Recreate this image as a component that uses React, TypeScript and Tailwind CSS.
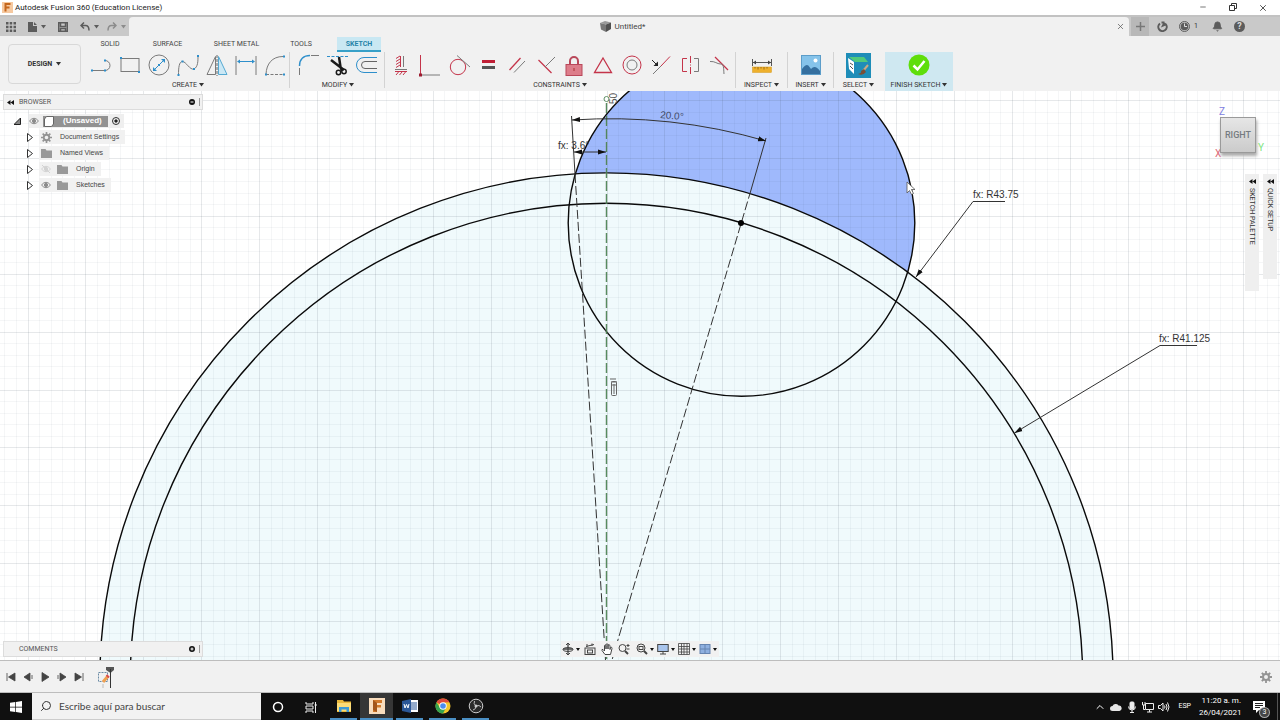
import React, { useState } from 'react';
import { Bell, ChevronUp, Minus, Search, Settings, X } from 'lucide-react';

const BLUE = '#2e8fcb';
const RED = '#c4344a';
const GREY = '#7a7a7a';

type IconDef = { label: string; art: React.ReactNode };

const Dots = ({ at }: { at: number[][] }) => (
  <>
    {at.map(([x, y]) => (
      <rect key={`${x}-${y}`} x={x - 1} y={y - 1} width="2" height="2" fill={BLUE} stroke="none" />
    ))}
  </>
);

const Art = ({ children, size = 24 }: { children: React.ReactNode; size?: number }) => (
  <svg width={size} height={size} viewBox="0 0 24 24" fill="none" stroke={GREY} strokeWidth="1" aria-hidden="true">
    {children}
  </svg>
);

const Caret = ({ className = 'text-[#333]' }: { className?: string }) => (
  <svg width="5" height="4" viewBox="0 0 5 4" className={`shrink-0 ${className}`} aria-hidden="true">
    <path d="M0 0H5L2.5 3.5Z" fill="currentColor" />
  </svg>
);

const createTools: IconDef[] = [
  { label: 'Line', art: <><path d="M3 17.5H16a5 5 0 0 0 0-10" /><Dots at={[[3, 17.5], [16, 17.5], [16, 7.5]]} /></> },
  { label: 'Rectangle', art: <><rect x="3" y="5.5" width="18" height="13" /><Dots at={[[3, 5], [21, 19]]} /></> },
  {
    label: 'Circle',
    art: (
      <>
        <circle cx="12" cy="12" r="10" />
        <path d="M7 17L17 7" stroke={BLUE} />
        <path d="M6 18v-4l4 4zM18 6v4l-4-4zM11 11h2v2h-2z" fill={BLUE} stroke="none" />
      </>
    ),
  },
  { label: 'Spline', art: <><path d="M2.5 22C2.500 15 3 8.500 6.500 8.500S14 17.500 18 16C22 14 22 8 22 3" /><Dots at={[[2.5, 22], [6.5, 8.5], [18, 16], [22, 3]]} /></> },
  {
    label: 'Mirror',
    art: (
      <>
        <path d="M2 21.500H10.500V3.500Z" />
        <path d="M13.500 3.500L22 21.500H13.500Z" fill="#cbe8f5" stroke="#55a9d2" />
        <path d="M12 2V23" stroke="#666" strokeDasharray="3 1" />
      </>
    ),
  },
  {
    label: 'Sketch Dimension',
    art: (
      <>
        <path d="M2 3V22M22 3V22" />
        <path d="M4 8.500H20" stroke={BLUE} />
        <path d="M3 8.500L6 6.500V10.500ZM21 8.500L18 6.500V10.500Z" fill={BLUE} stroke="none" />
      </>
    ),
  },
  { label: 'Arc', art: <><path d="M3 21C3.500 11 9 3.500 20 3.500" /><path d="M3 21.500H20" strokeDasharray="3 1.500" /><Dots at={[[3, 21.5], [21, 3.5], [21, 21.5]]} /></> },
];

const modifyTools: IconDef[] = [
  { label: 'Fillet', art: <><path d="M2.500 15V22M14 2.500H22" /><path d="M2.500 13C2.500 6 7 2.500 13 2.500" stroke={BLUE} strokeWidth="1.500" /></> },
  {
    label: 'Trim',
    art: (
      <>
        <path d="M1 3.500H22" stroke={BLUE} strokeDasharray="3 1.500" />
        <path d="M13 4L14.500 14L16 18M5 7L18 17" stroke="#1a1a1a" strokeWidth="2.500" />
        <circle cx="12.500" cy="19.500" r="2.200" stroke="#1a1a1a" strokeWidth="1.500" />
        <circle cx="18" cy="18.500" r="2.200" stroke="#1a1a1a" strokeWidth="1.500" />
      </>
    ),
  },
  { label: 'Offset', art: <><path d="M22 4.500H9a7.500 7.500 0 0 0 0 15H22" stroke={BLUE} /><path d="M22 8.500H10a3.500 3.500 0 0 0 0 7H22" stroke="#666" /></> },
];

const constraintTools: IconDef[] = [
  {
    label: 'Horizontal/Vertical',
    art: (
      <>
        <path d="M11.500 3V14M7 5.500l4-2.500M7 8.500l4-2.500M7 11.500l4-2.500M7 14.500l4-2.500" stroke={RED} />
        <path d="M14.500 3V14M6 16.500H18" />
        <path d="M7 22l2.500-3M10.500 22l2.500-3M14 22l2.500-3M6 18.500H18" stroke={RED} />
      </>
    ),
  },
  { label: 'Coincident', art: <><path d="M2.500 2V22" stroke={RED} /><path d="M3 22H22" /><rect x="1" y="20.500" width="3" height="3" fill="#9c1c30" stroke="none" /></> },
  { label: 'Tangent', art: <><circle cx="11" cy="14" r="7.700" stroke={RED} /><path d="M10 2.500L23 14" /></> },
  { label: 'Equal', art: <><rect x="6" y="7" width="13" height="3" fill="#c01f36" stroke="none" /><rect x="6" y="13" width="13" height="3" fill="#555" stroke="none" /></> },
  { label: 'Parallel', art: <><path d="M4.500 17L15.500 5" stroke={RED} strokeWidth="1.300" /><path d="M9 19.500L20 8" /></> },
  { label: 'Perpendicular', art: <><path d="M4.500 7L17.500 20" stroke={RED} strokeWidth="1.300" /><path d="M11 14L21 4" /></> },
  {
    label: 'Fix/Unfix',
    art: (
      <>
        <path d="M8 12V8a4 4 0 0 1 8 0V12" stroke="#b9485a" strokeWidth="2" />
        <rect x="4" y="11.500" width="16" height="11" fill="#dd7d8a" stroke="#b9485a" />
        <path d="M12 15V18" stroke="#a33" />
      </>
    ),
  },
  { label: 'Midpoint', art: <path d="M12 5L20.500 19.500H3.500Z" stroke={RED} strokeWidth="1.300" /> },
  { label: 'Concentric', art: <><circle cx="12" cy="12" r="9" stroke={RED} /><circle cx="12" cy="12" r="5" /></> },
  {
    label: 'Collinear',
    art: (
      <>
        <path d="M4 21L12 13" />
        <path d="M12 13L21 3.500" stroke={RED} />
        <path d="M3 7L8 12" stroke="#222" />
        <path d="M9 13V8.500L4.500 13Z" fill="#222" stroke="none" />
      </>
    ),
  },
  { label: 'Symmetry', art: <><path d="M9 5.500H4.500V18.500H9" stroke={RED} /><path d="M12.500 3V21" stroke={RED} strokeDasharray="7 1.500 1 1.500" /><path d="M16 5.500H20.500V18.500H16" /></> },
  { label: 'Curvature', art: <><path d="M8 4L21 17" stroke={RED} strokeWidth="1.300" /><path d="M3 8.500C8 8 10 11 13.500 11S16.500 15 17 21" /></> },
];

const ToolButtons = ({ tools, width }: { tools: IconDef[]; width: string }) => (
  <div className={`flex h-[26px] items-center ${width}`}>
    {tools.map(t => (
      <button key={t.label} type="button" aria-label={t.label} className="flex flex-1 justify-center">
        <Art>{t.art}</Art>
      </button>
    ))}
  </div>
);

const Group = ({ label, children, className = '' }: { label: string; children: React.ReactNode; className?: string }) => (
  <div className={`flex flex-col items-center ${className}`}>
    {children}
    <button type="button" className="mt-px flex h-3 items-center gap-0.5 text-[7px] leading-3 whitespace-nowrap text-[#333]">
      {label}
      <Caret />
    </button>
  </div>
);

const Divider = () => <div className="h-9 w-px bg-[#d3d3d3]" />;

const TitleBar = () => (
  <header className="flex h-[15px] shrink-0 items-center bg-white pl-0.5">
    <svg width="11" height="11" viewBox="0 0 11 11" aria-hidden="true">
      <rect width="11" height="11" fill="#f6c9a0" />
      <path d="M3.500 9.500V2H8.500M3.500 5.500H7.500" fill="none" stroke="#c4661c" strokeWidth="2" />
    </svg>
    <h1 className="ml-0.5 text-[8px] leading-[15px] whitespace-nowrap text-[#222]">Autodesk Fusion 360 (Education License)</h1>
    <div className="mr-0.5 ml-auto flex text-[#333]">
      <button type="button" aria-label="Minimize" className="flex w-[30px] justify-center"><Minus size={8} /></button>
      <button type="button" aria-label="Restore" className="flex w-[30px] justify-center">
        <svg width="8" height="8" viewBox="0 0 8 8" fill="none" stroke="currentColor">
          <path d="M.5 2.500H5.500V7.500H.5ZM2.500 2.500V.5H7.500V5.500H5.500" />
        </svg>
      </button>
      <button type="button" aria-label="Close" className="flex w-[30px] justify-center"><X size={10} /></button>
    </div>
  </header>
);

const TabBar = () => (
  <div className="flex h-[21px] shrink-0 border-t-2 border-[#c2c2c2] bg-[#c9c9c9] text-[#5c5c5c]">
    <div className="flex w-[129px] items-center pl-1.5">
      <button type="button" aria-label="Data panel">
        <svg width="10" height="10" viewBox="0 0 10 10" fill="currentColor">
          <path d="M0 0h2.500v2.500H0zM3.700 0h2.500v2.500H3.700zM7.500 0H10v2.500H7.500zM0 3.700h2.500v2.500H0zM3.700 3.700h2.500v2.500H3.700zM7.500 3.700H10v2.500H7.500zM0 7.500h2.500V10H0zM3.700 7.500h2.500V10H3.700zM7.500 7.500H10V10H7.500z" />
        </svg>
      </button>
      <button type="button" aria-label="File" className="ml-3 flex items-center gap-1">
        <svg width="9" height="10" viewBox="0 0 9 10" fill="currentColor"><path d="M0 0H5V4H9V10H0ZM6 0L9 3H6Z" /></svg>
        <Caret className="text-[#5c5c5c]" />
      </button>
      <button type="button" aria-label="Save" className="ml-3">
        <svg width="10" height="10" viewBox="0 0 10 10" fill="none" stroke="currentColor" strokeWidth="1.500">
          <path d="M.7.7H9.300V9.300H.7ZM2.500.7V4.500H7.500V.7M2.500 9.300V6.500H7.500V9.300" />
        </svg>
      </button>
      <button type="button" aria-label="Undo" className="ml-3 flex items-center gap-1">
        <svg width="10" height="9" viewBox="0 0 10 9"><path d="M4 .5L1 3.500 4 6.500M1 3.500H5.500Q9 3.500 9 8.500" fill="none" stroke="currentColor" strokeWidth="1.500" /></svg>
        <Caret className="text-[#5c5c5c]" />
      </button>
      <button type="button" aria-label="Redo" className="ml-2 flex items-center gap-1 text-[#8c8c8c]">
        <svg width="10" height="9" viewBox="0 0 10 9"><path d="M6 .5L9 3.500 6 6.500M9 3.500H4.500Q1 3.500 1 8.500" fill="none" stroke="currentColor" strokeWidth="1.500" /></svg>
        <Caret className="text-[#8c8c8c]" />
      </button>
    </div>
    <div className="flex flex-1 items-center rounded-t-sm bg-[#f1f1f1] pr-1">
      <div className="flex flex-1 items-center justify-center gap-1">
        <svg width="11" height="11" viewBox="0 0 11 11" aria-hidden="true">
          <path d="M0 2L5 0L11 1.500L6 3.500Z" fill="#999" />
          <path d="M0 2L6 3.500V11L1 8.500Z" fill="#777" />
          <path d="M6 3.500L11 1.500V8L6 11Z" fill="#505050" />
        </svg>
        <span className="text-[8px] leading-3 text-[#444]">Untitled*</span>
      </div>
      <button type="button" aria-label="Close tab"><X size={9} /></button>
    </div>
    <div className="flex w-[151px] items-center">
      <button type="button" aria-label="New tab" className="ml-0.5 flex h-full w-[18px] items-center justify-center bg-[#b8b8b8]">
        <svg width="9" height="9" viewBox="0 0 9 9"><path d="M4.500 0V9M0 4.500H9" stroke="#777" strokeWidth="1.500" /></svg>
      </button>
      <button type="button" aria-label="Extensions" className="ml-2">
        <svg width="11" height="11" viewBox="0 0 11 11" fill="none" stroke="currentColor" strokeWidth="2">
          <path d="M3 2.500A4.200 4.200 0 1 0 9 3.500M4.500 1.500H7.500M7.500 1.500L6 4.500L9.500 3" />
        </svg>
      </button>
      <button type="button" className="ml-[11px] flex items-center gap-1 text-[7px] text-[#333]">
        <svg width="11" height="11" viewBox="0 0 11 11" fill="none">
          <circle cx="5.500" cy="5.500" r="5" stroke="#5c5c5c" />
          <circle cx="5.500" cy="5.500" r="3.800" fill="#5c5c5c" />
          <path d="M5.500 2.500V5.500H8" stroke="#ddd" />
        </svg>
        1
      </button>
      <button type="button" aria-label="Notifications" className="ml-3.5"><Bell size={11} fill="currentColor" /></button>
      <button type="button" aria-label="Help" className="ml-[11px] flex size-[11px] items-center justify-center rounded-full bg-[#5c5c5c] text-[9px] leading-none font-bold text-[#ddd]">?</button>
    </div>
  </div>
);

const ribbonTabs = [
  { name: 'SOLID', width: 'w-[46px]' },
  { name: 'SURFACE', width: 'w-[69px]' },
  { name: 'SHEET METAL', width: 'w-[69px]' },
  { name: 'TOOLS', width: 'w-[60px]' },
  { name: 'SKETCH', width: 'ml-1.5 w-[44px]' },
];

const Ribbon = () => {
  const [tab, setTab] = useState('SKETCH');

  return (
    <div className="flex h-[55px] shrink-0 bg-[#f1f1f1]">
      <button type="button" className="mt-2 ml-2 flex h-10 w-[73px] items-center justify-center gap-1 rounded-sm border border-[#d8d8d8] text-[7px] font-bold text-[#333]">
        DESIGN
        <Caret />
      </button>
      <div className="ml-1.5">
        <nav className="flex h-4 pt-px">
          {ribbonTabs.map(t => (
            <button
              key={t.name}
              type="button"
              onClick={() => setTab(t.name)}
              className={`h-[15px] text-[7px] ${t.width} ${
                tab === t.name ? 'bg-[#c9e8f3] font-bold text-[#2684a8] shadow-[inset_0_-2px_0_#37a0c8]' : 'text-[#444]'
              }`}
            >
              {t.name}
            </button>
          ))}
        </nav>
        <div className="flex h-[39px]">
          <Group label="CREATE"><ToolButtons tools={createTools} width="w-[202px]" /></Group>
          <Divider />
          <Group label="MODIFY" className="ml-1 mr-0.5"><ToolButtons tools={modifyTools} width="w-[88px]" /></Group>
          <Divider />
          <Group label="CONSTRAINTS" className="mx-0.5"><ToolButtons tools={constraintTools} width="w-[346px]" /></Group>
          <Divider />
          <Group label="INSPECT" className="w-[51px]">
            <button type="button" aria-label="Measure" className="flex h-[26px] items-center">
              <Art>
                <path d="M2.500 6V13M21.500 6V13M3 9.500H21" stroke="#555" />
                <path d="M3 9.500l3-2v4zM21 9.500l-3-2v4z" fill="#444" stroke="none" />
                <rect x="2.500" y="14" width="19" height="5.500" fill="#eeb02c" stroke="#d69a1e" strokeWidth=".5" />
                <path d="M5 14v1.500M8 14v2.500M11 14v1.500M14 14v2.500M17 14v1.500" stroke="#8a5c10" strokeWidth=".8" />
              </Art>
            </button>
          </Group>
          <Divider />
          <Group label="INSERT" className="w-[45px]">
            <button type="button" aria-label="Insert image" className="flex h-[26px] items-center">
              <Art>
                <rect x="2.500" y="2.500" width="19" height="19" fill="#85c3ea" stroke="#5c9dc9" />
                <path d="M3 16Q8 9 10.500 14L12 16Q16 11 21 18V21H3Z" fill="#356f9f" stroke="none" />
                <circle cx="16.500" cy="7.500" r="2" fill="#fff" stroke="none" />
              </Art>
            </button>
          </Group>
          <Divider />
          <Group label="SELECT" className="w-[49px]">
            <button type="button" aria-label="Select" className="flex h-[26px] items-center">
              <svg width="25" height="25" viewBox="0 0 25 25">
                <rect width="25" height="25" fill="#1e8db8" />
                <path d="M2 5L8 9V21L3 16Z" fill="#fff" />
                <path d="M4 10L7 12M4 13L7 16" stroke="#555" strokeWidth="1" />
                <path d="M3 4H18L22 9H9Z" fill="#4fc97c" />
                <path d="M22 12L17 18" stroke="#c9a883" strokeWidth="2" />
                <path d="M18 16L20 19Q17 23 12 21Q16 20 15 18Z" fill="#7b4f37" />
              </svg>
            </button>
          </Group>
          <Group label="FINISH SKETCH" className="ml-0.5 w-[68px] bg-[#cfe8f1]">
            <button type="button" aria-label="Finish sketch" className="flex h-[26px] items-center">
              <Art>
                <circle cx="12" cy="12" r="10.500" fill="#5ede0b" stroke="none" />
                <path d="M6.500 12.500L10.500 16.500L17.500 8" stroke="#fff" strokeWidth="2.500" />
              </Art>
            </button>
          </Group>
        </div>
      </div>
    </div>
  );
};

// sketch origin, and screen pixels for one grid step (1 mm)
const ORIGIN = { x: 606.5, y: 679.5 };
const STEP = 11.58;

const gridLines = (origin: number, from: number, to: number) => {
  const lines: { at: number; major: boolean }[] = [];
  for (let i = Math.ceil((from - origin) / STEP); origin + i * STEP <= to; i++) {
    lines.push({ at: Math.floor(origin + i * STEP), major: i % 5 === 0 });
  }
  return lines;
};

const Sketch = () => (
  <svg className="block h-full w-full" viewBox="0 91 1280 569" preserveAspectRatio="xMidYMid slice" fontFamily="Liberation Sans, Arial, sans-serif" fontSize="10">
    <defs>
      <marker id="arrow" viewBox="0 0 8 6" refX="8" refY="3" markerWidth="8" markerHeight="6" orient="auto-start-reverse" markerUnits="userSpaceOnUse">
        <path d="M0 .5L8 3L0 5.500Z" fill="#111" />
      </marker>
    </defs>
    <rect x="0" y="91" width="1280" height="569" fill="#fff" />
    <circle cx="741.500" cy="223" r="173.300" fill="#9fb9fc" />
    <circle cx={ORIGIN.x} cy={ORIGIN.y} r="506.600" fill="#f0fafc" />
    <g shapeRendering="crispEdges" stroke="#40505a">
      {gridLines(ORIGIN.x + 0.5, 0, 1280).map(l => (
        <line key={l.at} x1={l.at + 0.5} x2={l.at + 0.5} y1="91" y2="660" strokeOpacity={l.major ? 0.13 : 0.05} />
      ))}
      {gridLines(ORIGIN.y, 91, 660).map(l => (
        <line key={l.at} y1={l.at + 0.5} y2={l.at + 0.5} x1="0" x2="1280" strokeOpacity={l.major ? 0.13 : 0.05} />
      ))}
    </g>
    <g fill="none" stroke="#0a0a0a" strokeWidth="1.400">
      <circle cx={ORIGIN.x} cy={ORIGIN.y} r="506.600" />
      <circle cx={ORIGIN.x} cy={ORIGIN.y} r="476.200" />
      <circle cx="741.500" cy="223" r="173.300" />
    </g>
    <path d="M606.500 103V660" stroke="#8b9a8b" strokeOpacity=".6" strokeWidth="2" strokeDasharray="10 3" />
    <path d="M606.500 103V660" stroke="#3f7f48" strokeOpacity=".8" strokeWidth="1" strokeDasharray="10 3" />
    <circle cx="606.500" cy="99" r="2.500" fill="#fff" stroke="#5f8f66" />
    <g fill="none" stroke="#333" strokeWidth="1">
      <path d="M575 174L605.500 660M751 190L612 660" strokeDasharray="9 3" />
      <path d="M571.500 116L575 174M766 138L751 190" />
      <path d="M572 120A561 561 0 0 1 766 141" markerStart="url(#arrow)" markerEnd="url(#arrow)" />
      <path d="M574 152H606" markerStart="url(#arrow)" markerEnd="url(#arrow)" />
      <path d="M1005 201.500H973L916 277" markerEnd="url(#arrow)" />
      <path d="M1197 345.500H1160L1014.500 433" markerEnd="url(#arrow)" />
    </g>
    <circle cx="741" cy="223" r="3" fill="#000" />
    <g fill="#333">
      <text x="660" y="118" fill="#444c66" transform="rotate(5 660 118)">20.0°</text>
      <text x="558" y="149">fx: 3.6°</text>
      <text x="973" y="198">fx: R43.75</text>
      <text x="1159" y="342">fx: R41.125</text>
      <text x="617" y="104" fill="#555" transform="rotate(-90 617 104)">50</text>
    </g>
    <g fill="none" stroke="#666" strokeWidth="1">
      <path d="M610 379h6M611 382h6M611 385h6" />
      <rect x="611.500" y="381.500" width="5" height="14" rx="1" />
      <path d="M614 384v10" />
    </g>
    <path d="M907 182v11l2.500-2.500 2 4 2-1-2-4h3.500z" fill="#fff" stroke="#555" strokeWidth=".8" />
  </svg>
);

const Eye = ({ off }: { off?: boolean }) => (
  <svg width="10" height="8" viewBox="0 0 10 8" fill="none" stroke={off ? '#d2d2d2' : '#8a8a8a'} aria-hidden="true">
    <path d="M.5 4Q5-1.500 9.500 4Q5 9.500.5 4Z" />
    <circle cx="5" cy="4" r="1.600" fill={off ? '#d2d2d2' : '#8a8a8a'} />
    {off && <path d="M1 0L9 8" />}
  </svg>
);

const Gear = ({ size }: { size: number }) => (
  <svg width={size} height={size} viewBox="0 0 12 12" fill="none" stroke="#949494" aria-hidden="true">
    <circle cx="6" cy="6" r="3" strokeWidth="2" />
    <path d="M6 0V2.500M6 9.500V12M0 6H2.500M9.500 6H12M1.800 1.800L3.500 3.500M8.500 8.500L10.200 10.200M1.800 10.200L3.500 8.500M8.500 3.500L10.200 1.800" strokeWidth="1.800" />
  </svg>
);

const Folder = () => (
  <svg width="11" height="9" viewBox="0 0 11 9" aria-hidden="true"><path d="M0 0H4.500L5.500 1.500H11V9H0Z" fill="#999" /></svg>
);

const treeItems = [
  { name: 'Document Settings', icon: <Gear size={11} /> },
  { name: 'Named Views', icon: <Folder /> },
  { name: 'Origin', icon: <Folder />, eye: 'off' },
  { name: 'Sketches', icon: <Folder />, eye: 'on' },
];

const PanelHeader = ({ title, open }: { title: string; open?: boolean }) => (
  <div className="flex h-4 items-center border border-[#dcdcdc] bg-[#f1f1f1] pl-[3px]">
    <div className="w-3">
      {open && <svg width="7" height="5" viewBox="0 0 7 5"><path d="M3.500 0V5L0 2.500ZM7 0V5L3.500 2.500Z" fill="#111" /></svg>}
    </div>
    <h2 className="text-[7px] text-[#555]">{title}</h2>
    <button type="button" aria-label={`Toggle ${title.toLowerCase()}`} className="ml-auto">
      <svg width="6" height="6" viewBox="0 0 6 6">
        <circle cx="3" cy="3" r="3" fill="#111" />
        <path d={open ? 'M1.500 3H4.500' : 'M1.500 3H4.500M3 1.500V4.500'} stroke="#fff" />
      </svg>
    </button>
    <div className="mr-0.5 ml-1 h-2 w-px bg-[#999]" />
  </div>
);

const Browser = () => (
  <aside className="absolute top-[3px] left-[3px] w-[200px]">
    <PanelHeader title="BROWSER" open />
    <ul className="pt-[3px] font-['Liberation_Sans',Arial,sans-serif] text-[7px] text-[#444]">
      <li className="flex h-4 items-center pl-[11px]">
        <svg width="7" height="7" viewBox="0 0 7 7"><path d="M6.500 0V6.500H0Z" fill="#888" stroke="#222" /></svg>
        <div className="ml-2 flex h-3.5 items-center gap-1 bg-[#efefef] pr-1">
          <Eye />
          <div className="flex h-[11px] items-center bg-[#929292] pr-1.5 text-[8px] font-bold text-white">
            <svg width="12" height="11" viewBox="0 0 12 11" className="mr-2"><path d="M1.500 3L3.500.5H10.500V8L8.500 10.500H1.500Z" fill="#fff" stroke="#666" /></svg>
            (Unsaved)
          </div>
          <input type="radio" name="active-component" aria-label="Activate component" defaultChecked className="size-2 appearance-none rounded-full border border-[#333] bg-[radial-gradient(#222_35%,transparent_40%)]" />
        </div>
      </li>
      {treeItems.map(item => (
        <li key={item.name} className="flex h-4 items-center pl-6">
          <button type="button" aria-label={`Expand ${item.name}`}>
            <svg width="6" height="9" viewBox="0 0 6 9"><path d="M.5.5L5.500 4.500L.5 8.500Z" fill="#fff" stroke="#333" /></svg>
          </button>
          <div className="ml-1.5 flex h-3.5 items-center bg-[#f1f1f1] pr-1.5">
            {item.eye && <span className="mr-1 ml-0.5"><Eye off={item.eye === 'off'} /></span>}
            <span className="mr-2 ml-px flex w-3 justify-center">{item.icon}</span>
            {item.name}
          </div>
        </li>
      ))}
    </ul>
  </aside>
);

const ViewCube = () => (
  <div className="absolute top-4 right-[18px] w-[47px] text-[10px] leading-none">
    <span className="block pl-1 text-[#7c7ce0]">Z</span>
    <div className="flex items-end">
      <span className="-mb-1.5 w-[5px] text-[#e06a7a]">X</span>
      <button type="button" className="h-9 w-9 shrink-0 border border-[#9a9a9a] bg-linear-to-b from-[#e6e6e6] to-[#cbcbcb] text-center text-[9px] font-medium text-[#757b80] shadow-[1px_3px_3px_#aaa]">
        RIGHT
      </button>
      <span className="ml-0.5 text-[#7fe57f]">Y</span>
    </div>
  </div>
);

const SidePalette = ({ title, height }: { title: string; height: string }) => (
  <button type="button" className={`flex w-[14px] flex-col items-center bg-[#efefef] pt-[5px] text-[7px] text-[#333] ${height}`}>
    <svg width="7" height="5" viewBox="0 0 7 5"><path d="M3.500 0V5L0 2.500ZM7 0V5L3.500 2.500Z" fill="#111" /></svg>
    <span className="mt-1 leading-[14px] whitespace-nowrap [writing-mode:vertical-rl]">{title}</span>
  </button>
);

const navTools: { label: string; caret?: boolean; gap: string; art: React.ReactNode }[] = [
  { label: 'Orbit', caret: true, gap: 'ml-px', art: <><path d="M6 1V11M1 6H11" strokeWidth="1.300" /><ellipse cx="6" cy="6.500" rx="5" ry="2" /><path d="M4 2l2-2 2 2M4 10l2 2 2-2" /></> },
  { label: 'Look At', gap: 'ml-1', art: <><rect x="1" y="5" width="10" height="6.500" /><rect x="3.500" y="7" width="5" height="3" /><path d="M2 3.500L10 1.500M3 1v3M8 .5V3" /></> },
  { label: 'Pan', gap: 'ml-[5px]', art: <path d="M4 11.500L1 7.500Q.5 6 2 6.500L3.500 8V2.500Q4 1 5 2.500V6V1.500Q6 0 7 1.500V6V2Q8 1 9 2.500V6.500L9.500 4.500Q11 3.500 11 5.500L9.500 11.500Z" fill="#fff" /> },
  { label: 'Zoom', gap: 'ml-[5px]', art: <><circle cx="4.500" cy="5" r="3.500" /><path d="M7 8L10 11" strokeWidth="2" /><path d="M8.500 2.500H11.500M10 1V4M8.500 6H11.500" /></> },
  { label: 'Fit', caret: true, gap: 'ml-1.5', art: <><circle cx="5" cy="5" r="4" /><rect x="3" y="3.500" width="4" height="3" /><path d="M8 8L11 11" strokeWidth="2" /></> },
  { label: 'Display Settings', caret: true, gap: 'ml-[3px]', art: <><rect x=".7" y="1.500" width="10.500" height="7" fill="#a9c4ec" /><path d="M6 8.500V11M3 11H9" /></> },
  { label: 'Grid and Snaps', caret: true, gap: 'ml-[3px]', art: <path d="M.5.5H11.500V11.500H.5ZM3.500.5V11.500M6 .5V11.500M9 .5V11.500M.5 3.500H11.500M.5 6H11.500M.5 9H11.500" strokeWidth=".8" /> },
  { label: 'Viewports', caret: true, gap: 'ml-[3px]', art: <><rect x="1" y="1.500" width="10" height="9" fill="#8fb0e0" stroke="#6684b0" /><path d="M6 1.500V10.500M1 6H11" stroke="#6684b0" /></> },
];

const NavBar = () => (
  <div className="absolute bottom-[3px] left-1/2 flex h-4 w-[158px] -translate-x-1/2 items-center bg-[#f1f1f1]">
    {navTools.map(t => (
      <button key={t.label} type="button" aria-label={t.label} className={`flex shrink-0 items-center gap-0.5 ${t.gap}`}>
        <svg width="12" height="12" viewBox="0 0 12 12" fill="none" stroke="#444">{t.art}</svg>
        {t.caret && <svg width="4" height="3" viewBox="0 0 4 3"><path d="M0 0H4L2 3Z" fill="#111" /></svg>}
      </button>
    ))}
  </div>
);

const playback = [
  { label: 'Go to start', d: 'M1 1V9M9 1V9L2.500 5Z' },
  { label: 'Step back', d: 'M7 1V9L1 5ZM9 3V7' },
  { label: 'Play', d: 'M2 .5V9.500L9 5Z' },
  { label: 'Step forward', d: 'M3 1V9L9 5ZM1 3V7' },
  { label: 'Go to end', d: 'M9 1V9M1 1V9L7.500 5Z' },
];

const Timeline = () => (
  <div className="flex h-[33px] shrink-0 items-center border-t border-b border-t-[#bdbdbd] border-b-[#bdbdbd] bg-[#f1f1f1] pl-1.5">
    <div className="flex gap-[7px]">
      {playback.map(p => (
        <button key={p.label} type="button" aria-label={p.label}>
          <svg width="10" height="10" viewBox="0 0 10 10" fill="#444"><path d={p.d} stroke="#444" strokeWidth=".8" /></svg>
        </button>
      ))}
    </div>
    <svg width="20" height="24" viewBox="0 0 20 24" className="ml-3" fill="none" aria-hidden="true">
      <rect x="2.500" y="7.500" width="9" height="9" stroke="#6a8ba5" strokeDasharray="2 1" />
      <path d="M7 17L12 11" stroke="#f0a050" strokeWidth="3" />
      <path d="M10.500 10L13 12.500" stroke="#d94d4d" strokeWidth="2" />
      <path d="M7 19V23" stroke="#bbb" />
      <path d="M10 2H18V5L14.500 8L10 5Z" fill="#555" />
      <path d="M14.500 4V23" stroke="#333" />
    </svg>
    <button type="button" aria-label="Timeline settings" className="mr-2 ml-auto"><Gear size={12} /></button>
  </div>
);

const apps: { label: string; open?: boolean; active?: boolean; art: React.ReactNode }[] = [
  { label: 'Cortana', art: <circle cx="8" cy="8" r="4.500" stroke="#fff" strokeWidth="1.500" /> },
  { label: 'Task View', art: <path d="M3 3V5H10V3M3 14V12H10V14M3 7H10V10H3ZM12.500 3V14M11.500 6H14" stroke="#eee" /> },
  {
    label: 'File Explorer',
    open: true,
    art: <><path d="M1 2H7L8 3.500H15V14H1Z" fill="#e9b83c" /><path d="M1 5H15V13H1Z" fill="#fbdc77" /><path d="M3 9H13V14H10.500V11.500H5.500V14H3Z" fill="#3c9ad6" /></>,
  },
  {
    label: 'Fusion 360',
    open: true,
    active: true,
    art: <><rect width="16" height="16" fill="#f9dcbc" /><path d="M4 2H13V5H8V7H12V9.500H8V14H4Z" fill="#d27a2c" /><path d="M4 2L8 5V14L4 12Z" fill="#a3551a" /></>,
  },
  {
    label: 'Word',
    open: true,
    art: <><rect x="7" y="2" width="9" height="12" fill="#fff" /><path d="M9 5H15M9 7H15M9 9H15M9 11H15" stroke="#2b5797" /><path d="M0 3L9 1V15L0 13Z" fill="#2b5797" /><path d="M2 6L3 10L4.500 6.500L6 10L7 6" stroke="#fff" /></>,
  },
  {
    label: 'Chrome',
    open: true,
    art: (
      <>
        <circle cx="8" cy="8" r="7.500" fill="#f2c52b" />
        <path d="M8 8L1.500 4.250A7.500 7.500 0 0 1 14.500 4.250L8 4.500Z" fill="#df4a3c" />
        <path d="M1.500 4.250A7.500 7.500 0 0 0 8 15.500L11 9.800L5 9.800Z" fill="#34a350" />
        <circle cx="8" cy="8" r="3.700" fill="#fff" />
        <circle cx="8" cy="8" r="2.800" fill="#4a8cf0" />
      </>
    ),
  },
  {
    label: 'OBS Studio',
    open: true,
    art: <><circle cx="8" cy="8" r="6.800" fill="#2a2a2a" stroke="#ccc" /><path d="M8 8Q5 6 6.500 3M8 8Q11.500 6.500 13 9M8 8Q8 11.500 5 12" stroke="#bbb" /><circle cx="8" cy="8" r="1.500" fill="#ccc" /></>,
  },
];

const Taskbar = () => (
  <footer className="flex h-[27px] shrink-0 bg-[#101010] text-white">
    <button type="button" aria-label="Start" className="flex w-8 items-center justify-center">
      <svg width="12" height="12" viewBox="0 0 12 12" fill="#fff"><path d="M0 1.700L5.300 1V5.700H0ZM6 .9L12 0V5.700H6ZM0 6.400H5.300V11L0 10.300ZM6 6.400H12V12L6 11.100Z" /></svg>
    </button>
    <label className="flex w-[229px] items-center border-b border-[#ccc] bg-[#f2f2f2] pl-2">
      <Search size={12} className="-scale-x-100 text-[#333]" strokeWidth={2} />
      <input type="text" aria-label="Buscar" placeholder="Escribe aquí para buscar" className="ml-[7px] min-w-0 flex-1 bg-transparent font-[Lato,sans-serif] text-[10px] outline-none placeholder:text-[#444]" />
    </label>
    <div className="flex">
      {apps.map(a => (
        <button key={a.label} type="button" aria-label={a.label} className={`flex w-[33px] flex-col items-center ${a.active ? 'bg-[#363636]' : ''}`}>
          <span className="flex flex-1 items-center"><svg width="16" height="16" viewBox="0 0 16 16" fill="none">{a.art}</svg></span>
          {a.open && <span className={`h-0.5 bg-[#4a8fc4] ${a.active ? 'w-full' : 'w-[27px]'}`} />}
        </button>
      ))}
    </div>
    <div className="mr-0.5 ml-auto flex items-center border-r border-[#555]">
      <div className="flex items-center gap-1">
        <ChevronUp size={12} />
        <svg width="12" height="8" viewBox="0 0 12 8" fill="#e6e6e6"><path d="M2.500 8A2.500 2.500 0 0 1 2.500 3A3.500 3.500 0 0 1 8.500 2.500A2.800 2.800 0 0 1 9.500 8Z" /></svg>
        <svg width="12" height="12" viewBox="0 0 12 12" fill="none" stroke="#eee"><rect x="4" y="1" width="4" height="7" rx="1" fill="#eee" /><path d="M2.500 5.500Q2.500 9 6 9T9.500 5.500M6 9V11.500M4 11.500H8" /></svg>
        <svg width="12" height="12" viewBox="0 0 12 12" fill="none" stroke="#eee"><path d="M3.500 2.500H11.500V8.500H3.500ZM7.500 8.500V11M5 11H10M.5 1V4H3V1M1.500 4V8.500H3" /></svg>
        <svg width="12" height="12" viewBox="0 0 12 12" fill="none" stroke="#eee"><path d="M.5 4.500H2.500L5 2V10L2.500 7.500H.5ZM6.500 4.500Q7.500 6 6.500 7.500M8 3Q10 6 8 9M9.500 1.500Q12.500 6 9.500 10.500" /></svg>
      </div>
      <span className="ml-2 text-[7px]">ESP</span>
      <time className="ml-2 w-[42px] text-right text-[8px] leading-[12px] whitespace-nowrap">
        11:20 a. m.
        <br />
        26/04/2021
      </time>
      <button type="button" aria-label="3 notificaciones" className="relative mr-3 ml-3">
        <svg width="12" height="12" viewBox="0 0 12 12"><path d="M0 0H12V9H6L3 12V9H0Z" fill="#fff" /><path d="M2 2.500H10M2 4.500H10M2 6.500H7" stroke="#222" /></svg>
        <span className="absolute -right-1 -bottom-1 flex size-[9px] items-center justify-center rounded-full bg-[#444] text-[7px] leading-none ring-1 ring-[#aaa]">3</span>
      </button>
    </div>
  </footer>
);

const App: React.FC = () => {
  return (
    <div className="flex h-screen flex-col overflow-hidden bg-white font-[Roboto,sans-serif]">
      <TitleBar />
      <TabBar />
      <Ribbon />
      <main className="relative min-h-0 flex-1 overflow-hidden">
        <Sketch />
        <Browser />
        <ViewCube />
        <div className="absolute top-[83px] right-[3px] flex items-start gap-1">
          <SidePalette title="SKETCH PALETTE" height="h-[117px]" />
          <SidePalette title="QUICK SETUP" height="h-[105px]" />
        </div>
        <div className="absolute bottom-[3px] left-[3px] w-[200px]">
          <PanelHeader title="COMMENTS" />
        </div>
        <NavBar />
      </main>
      <Timeline />
      <Taskbar />
    </div>
  );
};

export default App;
